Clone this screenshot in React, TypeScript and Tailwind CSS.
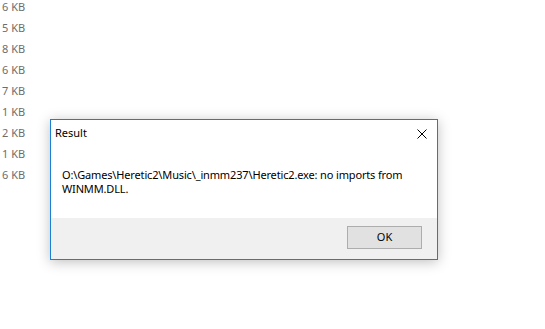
import React from "react";

const sizes = ["6 KB", "5 KB", "8 KB", "6 KB", "7 KB", "1 KB", "2 KB", "1 KB", "6 KB"];

export default function App() {
  return (
    <div
      className="relative w-[545px] h-[329px] bg-white overflow-hidden"
      style={{ fontFamily: '"Noto Sans", sans-serif' }}
    >
      <div className="flex flex-col -mt-[4px] pl-[2px]">
        {sizes.map((s, i) => (
          <div key={i} className="h-[21px] leading-[21px] text-[11px] text-[#6d6d6d]">
            {s}
          </div>
        ))}
      </div>

      <div className="absolute left-[50px] top-[119px] w-[388px] h-[141px] bg-white border border-[#1a80d4] shadow-[0_2px_12px_rgba(0,0,0,0.25)] flex flex-col">
        <div className="h-[26px] flex items-center justify-between pl-[4px] pr-[10px]">
          <span className="text-[11px] text-black">Result</span>
          <svg width="10" height="10" viewBox="0 0 10 10" className="mt-[1px]">
            <path d="M0.5 0.5 L9.5 9.5 M9.5 0.5 L0.5 9.5" stroke="#000" strokeWidth="1" />
          </svg>
        </div>
        <div className="flex-1 bg-white pt-[22px] pl-[11px] pr-[20px] text-[11px] leading-[14px] tracking-[-0.15px] text-black">
          O:\Games\Heretic2\Music\_inmm237\Heretic2.exe: no imports from WINMM.DLL.
        </div>
        <div className="h-[41px] bg-[#f0f0f0] flex items-start justify-end pt-[8px] pr-[15px]">
          <button className="w-[75px] h-[23px] border border-[#adadad] bg-[#e1e1e1] text-[11px] text-black flex items-center justify-center">
            OK
          </button>
        </div>
      </div>
    </div>
  );
}
